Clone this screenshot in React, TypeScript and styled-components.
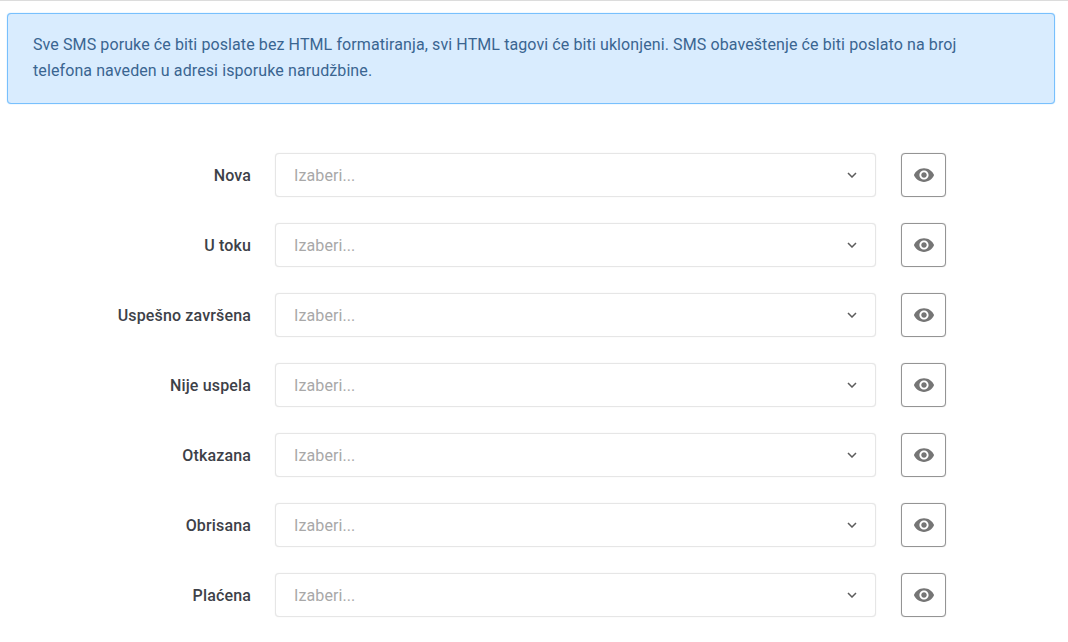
import React from 'react';
import styled, { createGlobalStyle } from 'styled-components';
import { MdVisibility } from 'react-icons/md';

const statuses = ['Nova', 'U toku', 'Uspešno završena', 'Nije uspela', 'Otkazana', 'Obrisana', 'Plaćena'];

const GlobalStyle = createGlobalStyle`
  html, body {
    margin: 0;
    padding: 0;
    background: #fff;
    height: 100%;
    overflow: hidden;
  }
  * {
    box-sizing: border-box;
  }
`;

const Page = styled.div`
  height: 642px;
  padding: 13px 13px 0 7px;
  border-top: 1px solid #dcdcdc;
  font-family: Roboto, 'Liberation Sans', sans-serif;
`;

const Alert = styled.div`
  height: 91px;
  margin-top: -1px;
  padding: 18px 25px 0;
  background: #d9ecfe;
  border: 1px solid #78c0fd;
  border-radius: 4px;
  box-shadow: 0 0 1px #78c0fd;
  color: #3a6591;
  font-size: 16px;
  line-height: 26px;
  letter-spacing: 0.1px;
`;

const Form = styled.div`
  display: flex;
  flex-direction: column;
  gap: 26px;
  margin-top: 49px;
`;

const Row = styled.div`
  display: grid;
  grid-template-columns: 244px 601px 45px;
  column-gap: 24px;
  align-items: center;
  height: 44px;
`;

const Label = styled.label`
  text-align: right;
  font-size: 16px;
  font-weight: 500;
  letter-spacing: 0.15px;
  color: #3d4148;
`;

const Select = styled.div`
  display: flex;
  align-items: center;
  justify-content: space-between;
  height: 44px;
  padding: 0 18px;
  background: #fff;
  border: 1px solid #e6e6e6;
  border-radius: 4px;
  box-shadow: 0 0 1px rgba(0, 0, 0, 0.12);
`;

const Placeholder = styled.span`
  font-size: 16px;
  letter-spacing: 0.1px;
  color: #a8a8a8;
`;

const IconButton = styled.button`
  display: flex;
  align-items: center;
  justify-content: center;
  width: 45px;
  height: 44px;
  margin-left: 1px;
  padding: 0;
  background: #fff;
  border: 1px solid #949494;
  border-radius: 4px;
  box-shadow: 0 0 1px rgba(0, 0, 0, 0.3);
  color: #757575;
  font-size: 22px;
`;

const Chevron = () => (
  <svg width="10" height="6" viewBox="0 0 10 6" fill="none">
    <path d="M1 1l4 4 4-4" stroke="#5c5c5c" strokeWidth="1.5" />
  </svg>
);

export default function App() {
  return (
    <>
      <GlobalStyle />
      <Page>
        <Alert>
          Sve SMS poruke će biti poslate bez HTML formatiranja, svi HTML tagovi će biti uklonjeni. SMS obaveštenje će biti poslato na broj
          <br />
          telefona naveden u adresi isporuke narudžbine.
        </Alert>
        <Form>
          {statuses.map((status) => (
            <Row key={status}>
              <Label>{status}</Label>
              <Select>
                <Placeholder>Izaberi...</Placeholder>
                <Chevron />
              </Select>
              <IconButton>
                <MdVisibility />
              </IconButton>
            </Row>
          ))}
        </Form>
      </Page>
    </>
  );
}
